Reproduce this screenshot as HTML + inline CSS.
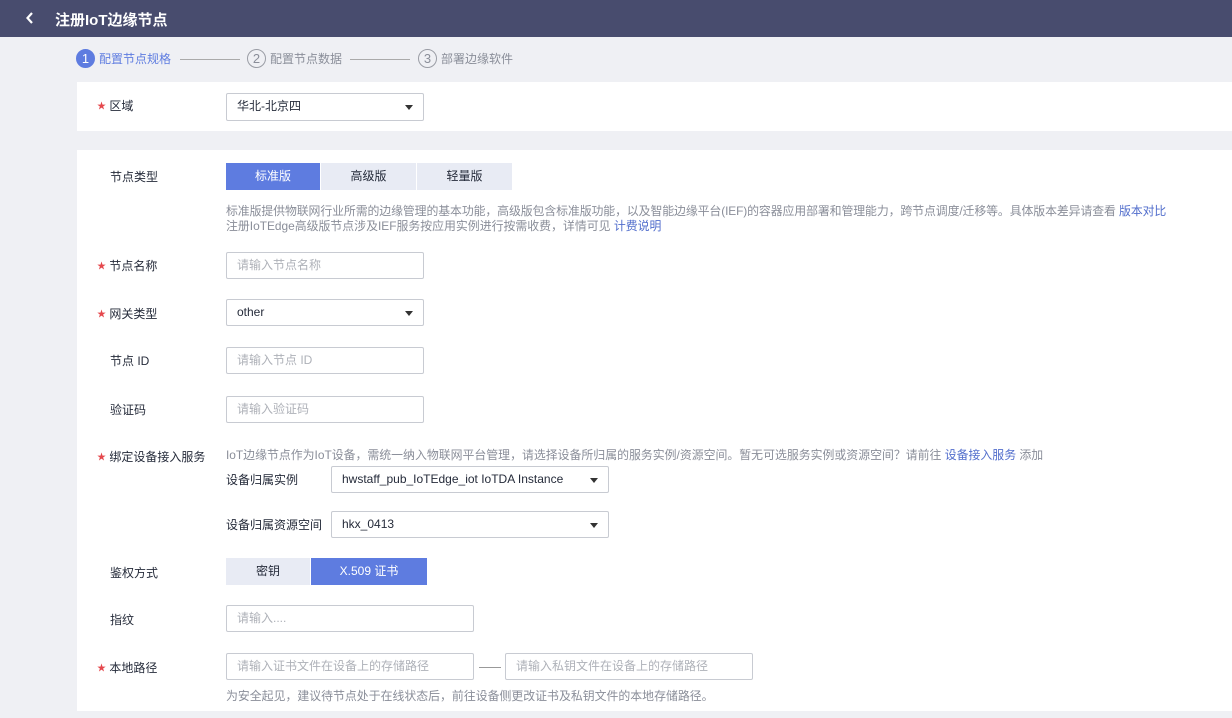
<!DOCTYPE html>
<html><head><meta charset="utf-8"><style>
*{margin:0;padding:0;box-sizing:border-box}
body{width:1232px;height:718px;overflow:hidden;background:#eff0f4;font-family:"Liberation Sans","Noto Sans CJK SC",sans-serif;font-size:12px;color:#252b3a;position:relative}
.a{position:absolute;white-space:nowrap}
.hdr{left:0;top:0;width:1232px;height:37px;background:#484c6e;color:#fff;font-size:15px;font-weight:bold}
.panel{background:#fff;position:absolute}
.lbl{color:#252b3a;font-size:12px}
.star{color:#e5484d;font-size:9px;position:relative;top:-1px}
.inp{position:absolute;height:27px;border:1px solid #c8cbd2;border-radius:2px;background:#fff;padding-left:10px;line-height:25px;color:#aeb1b8;font-size:12px}
.sel{color:#252b3a}
.sel:after{content:"";position:absolute;right:10px;top:11px;border-left:4px solid transparent;border-right:4px solid transparent;border-top:5px solid #333}
.btn{position:absolute;height:27px;line-height:27px;text-align:center;background:#e8ebf4;color:#252b3a}
.on{background:#5e7ce0;color:#fff}
.gray{color:#8a8e99;font-size:11.9px}
.link{color:#526ecc}
.step{position:absolute;top:49px;height:20px;line-height:20px;white-space:nowrap}
.circ{display:inline-block;vertical-align:top;width:19px;height:19px;border-radius:50%;border:1px solid #9a9da5;text-align:center;line-height:17px;color:#8a8e99;font-size:13px;margin-right:4px}
</style></head><body>
<div class="a hdr"><svg class="a" style="left:25px;top:12px" width="10" height="12" viewBox="0 0 10 12"><path d="M7 1 L2.5 6 L7 11" stroke="#fff" stroke-width="2.2" fill="none"/></svg><span class="a" style="left:55px;top:9px">注册IoT边缘节点</span></div>

<div class="step" style="left:76px;color:#5e7ce0"><span class="circ" style="background:#5e7ce0;border-color:#5e7ce0;color:#fff">1</span>配置节点规格</div>
<div class="a" style="left:180px;top:59px;width:60px;height:1px;background:#aaa"></div>
<div class="step" style="left:247px;color:#8a8e99"><span class="circ">2</span>配置节点数据</div>
<div class="a" style="left:350px;top:59px;width:60px;height:1px;background:#aaa"></div>
<div class="step" style="left:418px;color:#8a8e99"><span class="circ">3</span>部署边缘软件</div>

<div class="panel" style="left:77px;top:82px;width:1155px;height:49px"></div>
<div class="a lbl" style="left:97px;top:97px"><span class="star">★</span> 区域</div>
<div class="inp sel" style="left:226px;top:93px;width:198px;height:28px">华北-北京四</div>

<div class="panel" style="left:77px;top:150px;width:1155px;height:561px"></div>
<div class="a lbl" style="left:110px;top:168px">节点类型</div>
<div class="btn on" style="left:226px;top:163px;width:94px">标准版</div>
<div class="btn" style="left:321px;top:163px;width:95px">高级版</div>
<div class="btn" style="left:417px;top:163px;width:95px">轻量版</div>
<div class="a gray" style="left:226px;top:202px;letter-spacing:-0.1px">标准版提供物联网行业所需的边缘管理的基本功能，高级版包含标准版功能，以及智能边缘平台(IEF)的容器应用部署和管理能力，跨节点调度/迁移等。具体版本差异请查看 <span class="link">版本对比</span></div>
<div class="a gray" style="left:226px;top:217px">注册IoTEdge高级版节点涉及IEF服务按应用实例进行按需收费，详情可见 <span class="link">计费说明</span></div>

<div class="a lbl" style="left:97px;top:257px"><span class="star">★</span> 节点名称</div>
<div class="inp" style="left:226px;top:252px;width:198px">请输入节点名称</div>
<div class="a lbl" style="left:97px;top:305px"><span class="star">★</span> 网关类型</div>
<div class="inp sel" style="left:226px;top:299px;width:198px">other</div>
<div class="a lbl" style="left:110px;top:352px">节点 ID</div>
<div class="inp" style="left:226px;top:347px;width:198px">请输入节点 ID</div>
<div class="a lbl" style="left:110px;top:401px">验证码</div>
<div class="inp" style="left:226px;top:396px;width:198px">请输入验证码</div>

<div class="a lbl" style="left:97px;top:448px"><span class="star">★</span> 绑定设备接入服务</div>
<div class="a gray" style="left:226px;top:446px">IoT边缘节点作为IoT设备，需统一纳入物联网平台管理，请选择设备所归属的服务实例/资源空间。暂无可选服务实例或资源空间？请前往 <span class="link">设备接入服务</span> 添加</div>
<div class="a lbl" style="left:226px;top:471px">设备归属实例</div>
<div class="inp sel" style="left:331px;top:466px;width:278px">hwstaff_pub_IoTEdge_iot IoTDA Instance</div>
<div class="a lbl" style="left:226px;top:516px">设备归属资源空间</div>
<div class="inp sel" style="left:331px;top:511px;width:278px">hkx_0413</div>

<div class="a lbl" style="left:110px;top:564px">鉴权方式</div>
<div class="btn" style="left:226px;top:558px;width:84px">密钥</div>
<div class="btn on" style="left:311px;top:558px;width:116px">X.509 证书</div>
<div class="a lbl" style="left:110px;top:611px">指纹</div>
<div class="inp" style="left:226px;top:605px;width:248px">请输入....</div>
<div class="a lbl" style="left:97px;top:659px"><span class="star">★</span> 本地路径</div>
<div class="inp" style="left:226px;top:653px;width:248px">请输入证书文件在设备上的存储路径</div>
<div class="a" style="left:479px;top:667px;width:22px;height:1px;background:#999"></div>
<div class="inp" style="left:505px;top:653px;width:248px">请输入私钥文件在设备上的存储路径</div>
<div class="a gray" style="left:226px;top:687px">为安全起见，建议待节点处于在线状态后，前往设备侧更改证书及私钥文件的本地存储路径。</div>
</body></html>
